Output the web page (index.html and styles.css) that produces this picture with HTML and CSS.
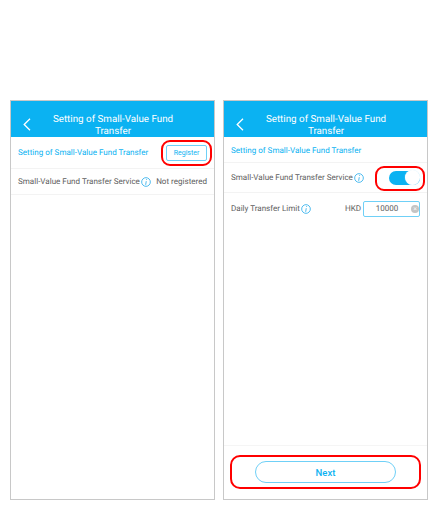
FILE: index.html
```html
<!DOCTYPE html>
<html lang="en">
<head>
<meta charset="utf-8">
<title>Setting of Small-Value Fund Transfer</title>
<link rel="stylesheet" href="styles.css">
</head>
<body>
<main class="screens">
  <section class="phone">
    <header class="bar">
      <svg class="back" viewBox="0 0 8 13"><path d="M7 .8 1.2 6.5 7 12.2"/></svg>
      <h1 class="title">Setting of Small-Value Fund Transfer</h1>
    </header>
    <div class="row row-reg">
      <span class="link">Setting of Small-Value Fund Transfer</span>
      <span class="mark-wrap"><button class="reg">Register</button><span class="mark mark-reg"></span></span>
    </div>
    <div class="row row-status">
      <span class="label">Small-Value Fund Transfer Service<svg class="info" viewBox="0 0 12 12"><circle cx="6" cy="6" r="5.2"/><path d="M6.7 2.6v1M6.3 5l-.7 4.4"/></svg></span>
      <span class="label">Not registered</span>
    </div>
  </section>
  <section class="phone">
    <header class="bar">
      <svg class="back" viewBox="0 0 8 13"><path d="M7 .8 1.2 6.5 7 12.2"/></svg>
      <h1 class="title">Setting of Small-Value Fund Transfer</h1>
    </header>
    <div class="row row-head"><span class="link">Setting of Small-Value Fund Transfer</span></div>
    <div class="row row-service">
      <span class="label">Small-Value Fund Transfer Service<svg class="info" viewBox="0 0 12 12"><circle cx="6" cy="6" r="5.2"/><path d="M6.7 2.6v1M6.3 5l-.7 4.4"/></svg></span>
      <span class="mark-wrap"><span class="toggle"><span class="knob"></span></span><span class="mark mark-toggle"></span></span>
    </div>
    <div class="row row-limit">
      <span class="label">Daily Transfer Limit<svg class="info" viewBox="0 0 12 12"><circle cx="6" cy="6" r="5.2"/><path d="M6.7 2.6v1M6.3 5l-.7 4.4"/></svg></span>
      <span class="limit"><span class="label">HKD</span><span class="field">10000<span class="clear">×</span></span></span>
    </div>
    <footer class="foot">
      <span class="mark-wrap"><button class="next">Next</button><span class="mark mark-next"></span></span>
    </footer>
  </section>
</main>
</body>
</html>
```
FILE: styles.css
```css
* { box-sizing: border-box; }
html, body { margin: 0; height: 510px; overflow: hidden; background: #fff; }
body { font-family: Roboto, "Liberation Sans", sans-serif; text-rendering: geometricPrecision; }
.screens { display: flex; gap: 8px; padding: 100px 0 0 10px; }
.phone { width: 205px; height: 400px; border: 1px solid #c8c8c8; display: flex; flex-direction: column; background: #fff; }
.bar { height: 36px; flex: none; background: #0bb2f2; display: flex; align-items: flex-start; position: relative; overflow: hidden; }
.back { width: 8px; height: 13px; position: absolute; left: 12px; top: 17px; fill: none; stroke: #fff; stroke-width: 1.3; }
.title { margin: 13px 0 0 26px; width: 152px; font-size: 9.8px; line-height: 12px; font-weight: 400; color: #fff; text-align: center; }
.row { display: flex; align-items: center; justify-content: space-between; padding: 0 7px; flex: none; border-bottom: 1px solid #f3f3f3; }
.row-reg { height: 32px; }
.row-status { height: 26px; }
.row-head { height: 26px; padding-top: 1px; }
.row-service { height: 30px; }
.row-limit { height: 31px; border-bottom: 0; }
.link { font-size: 8.05px; color: #0bb2f2; }
.label { font-size: 8.05px; color: #5e5e5e; display: inline-flex; align-items: center; white-space: nowrap; }
.info { width: 10px; height: 10px; margin-left: 1px; fill: none; stroke: #3fb6ee; stroke-width: 1.1; }
.mark-wrap { position: relative; display: inline-flex; }
.mark { position: absolute; border: 2px solid #f00; border-radius: 9px; }
.mark-reg { left: -5px; right: -5px; top: -5px; bottom: -5px; }
.mark-toggle { left: -14px; right: -5px; top: -5px; bottom: -6px; }
.mark-next { left: -25px; right: -25px; top: -6px; bottom: -6px; border-radius: 10px; }
.reg { width: 41px; height: 16px; padding: 0; border: 1px solid #6fd0f7; border-radius: 2px; background: #fff; color: #0bb2f2; font: 7px Roboto, sans-serif; }
.toggle { width: 31px; height: 14px; border-radius: 7px; background: #0bb2f2; position: relative; display: block; }
.knob { position: absolute; right: 0; top: -0.5px; width: 15px; height: 15px; border-radius: 50%; background: #fff; box-shadow: 0 0 1px #cdeefc; }
.limit { display: inline-flex; align-items: center; gap: 2px; }
.field { width: 57px; height: 16px; border: 1px solid #6fd0f7; border-radius: 2px; display: flex; align-items: center; justify-content: center; position: relative; font-size: 8.05px; color: #5e5e5e; padding-right: 9px; }
.clear { position: absolute; right: 0; top: 3px; width: 8px; height: 8px; border-radius: 50%; background: #c4c4c4; color: #fff; font-size: 7px; line-height: 8px; text-align: center; }
.foot { margin-top: auto; height: 54px; border-top: 1px solid #f5f5f5; display: flex; justify-content: center; align-items: flex-start; padding-top: 15px; }
.next { width: 141px; height: 22px; padding: 0; border: 1px solid #6fd0f7; border-radius: 11px; background: #fff; color: #0bb2f2; font: 500 9.5px Roboto, sans-serif; }
```
